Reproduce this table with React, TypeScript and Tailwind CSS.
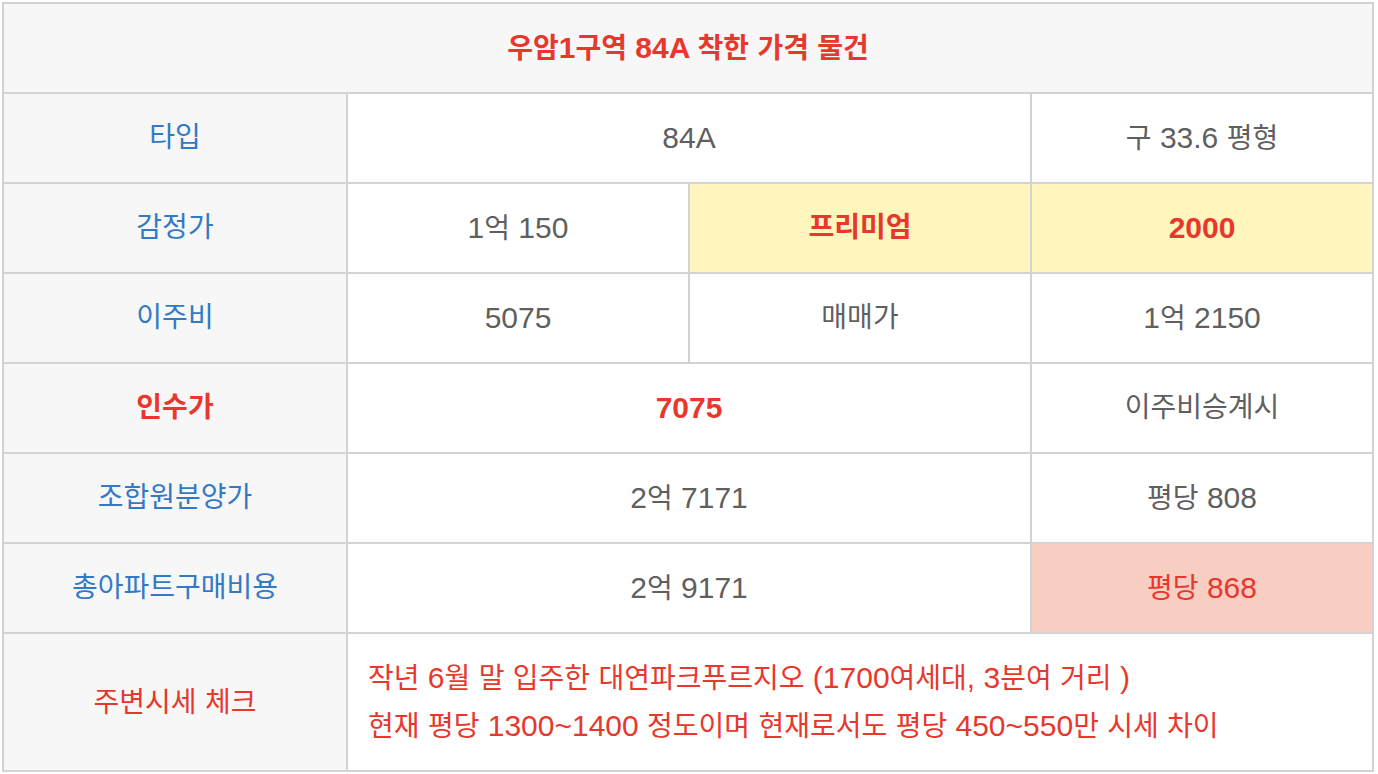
import React from 'react';

const font = { fontFamily: '"Liberation Sans", "Noto Sans CJK KR", sans-serif' };

const label = 'bg-[#f7f7f7] flex items-center justify-center text-[#3479c6]';
const cell = 'bg-white flex items-center justify-center text-[#5f5f5f]';

// hangul renders a touch smaller than latin in the source font mix
function T({ s }: { s: string }) {
  const parts = s.split(/([\uAC00-\uD7A3]+)/).filter(Boolean);
  return (
    <span>
      {parts.map((p, i) =>
        /[\uAC00-\uD7A3]/.test(p) ? (
          <span key={i} className="text-[28px]">{p}</span>
        ) : (
          <span key={i} className="text-[30px]">{p}</span>
        )
      )}
    </span>
  );
}

export default function App() {
  return (
    <div className="min-h-screen bg-white p-[2px]" style={font}>
      <div className="grid w-[1372px] grid-cols-[342px_340px_340px_340px] grid-rows-[88px_88px_88px_88px_88px_88px_88px_136px] gap-[2px] bg-[#d3d3d3] p-[2px] leading-none">
        {/* title */}
        <div className="col-span-4 bg-[#f7f7f7] flex items-center justify-center font-bold text-[#e8372c]">
          <T s="우암1구역 84A 착한 가격 물건" />
        </div>

        <div className={label}><T s="타입" /></div>
        <div className={`${cell} col-span-2`}><T s="84A" /></div>
        <div className={cell}><T s="구 33.6 평형" /></div>

        <div className={label}><T s="감정가" /></div>
        <div className={cell}><T s="1억 150" /></div>
        <div className="bg-[#fef6bd] flex items-center justify-center font-bold text-[#e8372c]"><T s="프리미엄" /></div>
        <div className="bg-[#fef6bd] flex items-center justify-center font-bold text-[#e8372c]"><T s="2000" /></div>

        <div className={label}><T s="이주비" /></div>
        <div className={cell}><T s="5075" /></div>
        <div className={cell}><T s="매매가" /></div>
        <div className={cell}><T s="1억 2150" /></div>

        <div className="bg-[#f7f7f7] flex items-center justify-center font-bold text-[#e8372c]"><T s="인수가" /></div>
        <div className="col-span-2 bg-white flex items-center justify-center font-bold text-[#e8372c]"><T s="7075" /></div>
        <div className={cell}><T s="이주비승계시" /></div>

        <div className={label}><T s="조합원분양가" /></div>
        <div className={`${cell} col-span-2`}><T s="2억 7171" /></div>
        <div className={cell}><T s="평당 808" /></div>

        <div className={label}><T s="총아파트구매비용" /></div>
        <div className={`${cell} col-span-2`}><T s="2억 9171" /></div>
        <div className="bg-[#f8cdc2] flex items-center justify-center text-[#e8372c]"><T s="평당 868" /></div>

        <div className="bg-[#f7f7f7] flex items-center justify-center text-[#e8372c]"><T s="주변시세 체크" /></div>
        <div className="col-span-3 bg-white flex flex-col justify-center gap-[18px] pl-[20px] text-[#e8372c]">
          <p><T s="작년 6월 말 입주한 대연파크푸르지오 (1700여세대, 3분여 거리 )" /></p>
          <p><T s="현재 평당 1300~1400 정도이며 현재로서도 평당 450~550만 시세 차이" /></p>
        </div>
      </div>
    </div>
  );
}
